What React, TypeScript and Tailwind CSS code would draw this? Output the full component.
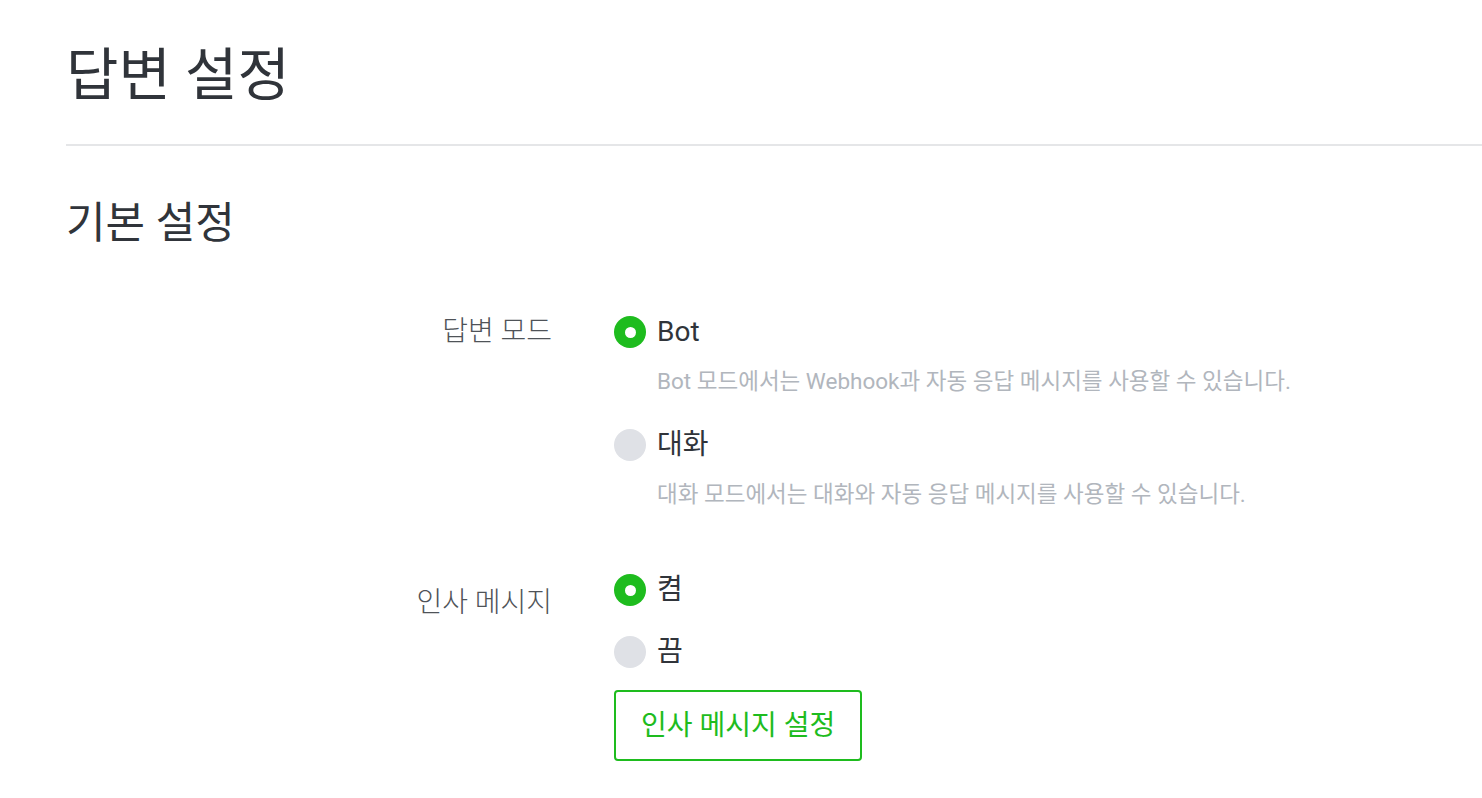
import { ReactNode } from 'react';

type RadioProps = {
    label: string;
    checked?: boolean;
    description?: string;
};

function Radio({ label, checked = false, description }: RadioProps) {
    return (
        <div>
            <label className="flex items-center gap-[11px] h-[40px] cursor-pointer">
                {checked ? (
                    <span className="w-8 h-8 rounded-full bg-[#1ebc1e] flex items-center justify-center">
                        <span className="w-[11px] h-[11px] rounded-full bg-white" />
                    </span>
                ) : (
                    <span className="w-8 h-8 rounded-full bg-[#dfe1e6]" />
                )}
                <span className="text-[28px] text-[#30343a]">{label}</span>
            </label>
            {description && (
                <p className="pl-[43px] mt-[14px] text-[22.5px] leading-[30px] text-[#b1b6bd]">{description}</p>
            )}
        </div>
    );
}

function Row({ label, offset = '', children }: { label: string; offset?: string; children: ReactNode }) {
    return (
        <div className="flex">
            <div className={`w-[486px] shrink-0 text-right text-[28px] font-light text-[#4f5358] leading-[40px] ${offset}`}>
                {label}
            </div>
            <div className="pl-[62px] flex-1">{children}</div>
        </div>
    );
}

export default function App() {
    return (
        <main
            className="min-h-screen bg-white pl-[66px] overflow-hidden"
            style={{ fontFamily: 'Roboto, "Noto Sans CJK KR", sans-serif' }}
        >
            <h1 className="pt-[36px] pb-[28px] text-[57px] leading-[80px] font-normal text-[#30343a]">답변 설정</h1>
            <div className="h-[2px] bg-[#e5e6e8]" />

            <h2 className="mt-[49px] text-[43px] leading-[56px] font-normal text-[#30343a]">기본 설정</h2>

            <div className="mt-[61px] space-y-[61px]">
                <Row label="답변 모드">
                    <div className="space-y-[29px]">
                        <Radio
                            label="Bot"
                            checked
                            description="Bot 모드에서는 Webhook과 자동 응답 메시지를 사용할 수 있습니다."
                        />
                        <Radio label="대화" description="대화 모드에서는 대화와 자동 응답 메시지를 사용할 수 있습니다." />
                    </div>
                </Row>

                <Row label="인사 메시지" offset="pt-[13px]">
                    <div className="space-y-[22px]">
                        <Radio label="켬" checked />
                        <Radio label="끔" />
                    </div>
                    <button className="mt-[18px] h-[71px] px-[25px] border-2 border-[#1ebc1e] rounded-[4px] text-[28px] text-[#1ebc1e] bg-white">
                        인사 메시지 설정
                    </button>
                </Row>
            </div>
        </main>
    );
}
